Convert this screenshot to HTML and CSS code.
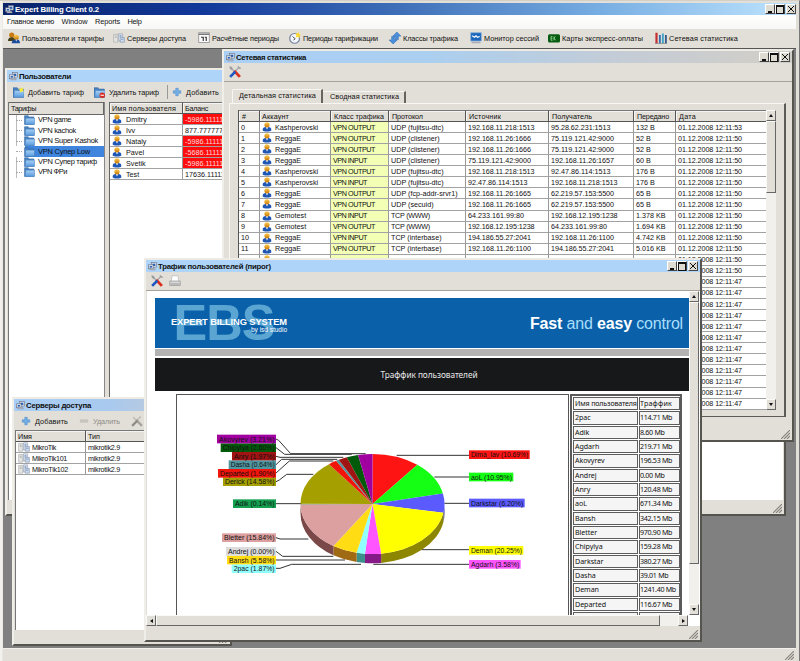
FILE: index.html
```html
<!DOCTYPE html>
<html lang="ru">
<head>
<meta charset="utf-8">
<title>Expert Billing Client 0.2</title>
<link rel="stylesheet" href="styles.css">
</head>
<body>
<svg class="defs" aria-hidden="true">
  <defs>
    <linearGradient id="gold" x1="0" y1="0" x2="0" y2="1"><stop offset="0" stop-color="#ffd25a"/><stop offset="1" stop-color="#c87400"/></linearGradient>
    <linearGradient id="blue" x1="0" y1="0" x2="0" y2="1"><stop offset="0" stop-color="#a8d2f6"/><stop offset="1" stop-color="#5a9ade"/></linearGradient>
  </defs>
  <symbol id="app" viewBox="0 0 16 16"><rect x="6" y="1" width="9" height="8" fill="#dfe6ee" stroke="#667"/><rect x="8" y="3" width="5" height="4" fill="#2860b8"/><rect x="1" y="5" width="8" height="7" fill="#dfe6ee" stroke="#667"/><rect x="3" y="7" width="4" height="3" fill="#2860b8"/><path d="M3 14h10l-1-3H4z" fill="#b8c0c8" stroke="#778" stroke-width=".7"/></symbol>
  <symbol id="user" viewBox="0 0 16 16"><path d="M1 13c0-4 2-5 5-5h4c3 0 5 1 5 5 0 3-14 3-14 0z" fill="#1d56b4"/><path d="M6 8l2 4 2-4z" fill="#fff"/><circle cx="8" cy="4.500" r="4.200" fill="url(#gold)"/></symbol>
  <symbol id="users" viewBox="0 0 16 16"><circle cx="5" cy="4" r="3.500" fill="#c97a10"/><path d="M0 12c0-4 2-5 5-5s6 1 6 5z" fill="#47401c"/><circle cx="11" cy="7" r="3.500" fill="url(#gold)"/><path d="M5 15c0-4 3-5 6-5s5 1 5 5z" fill="#1d4c9c"/><path d="M10 10l1 3 1-3z" fill="#fff"/></symbol>
  <symbol id="servers" viewBox="0 0 20 16"><path d="M1 2h7v13H1z" fill="#e4e4e2" stroke="#a8a8a8"/><path d="M3 5h3M3 7h3" stroke="#999"/><path d="M9 1h7v12H9z" fill="#dce4ee" stroke="#8e9bb0"/><path d="M11 4h3M11 6h3" stroke="#4775b8"/><path d="M12 7h7v8h-7z" fill="#cfdbea" stroke="#7e90aa"/><path d="M13.500 10h4" stroke="#4775b8"/></symbol>
  <symbol id="calendar" viewBox="0 0 16 16"><rect x="1" y="1" width="14" height="13" fill="#fafafa" stroke="#888"/><path d="M1 3h14" stroke="#777" stroke-width="2"/><path d="M4 7h3v5M9 7h2v5" fill="none" stroke="#333" stroke-width="1.500"/></symbol>
  <symbol id="clock" viewBox="0 0 16 16"><circle cx="7.500" cy="8.500" r="6.500" fill="#f4f7ff" stroke="#77809c" stroke-width="1.600"/><path d="M5 6l3 3-2 2" fill="none" stroke="#333" stroke-width="1.300"/><path d="M12.500 0l1 2.500 2.500.5-2 2 .5 3-2.500-1.500L9 7l1-3-1.500-2 2.500 0z" fill="#ffd82c"/></symbol>
  <symbol id="arrows" viewBox="0 0 16 16"><path d="M10.500 0L16 5.500h-3.500V10h-4V5.500H5z" fill="#4b90dc" stroke="#2563ae" stroke-width=".6"/><path d="M5.500 16L0 10.500h3.500V6h4v4.500H11z" fill="#4b90dc" stroke="#2563ae" stroke-width=".6"/></symbol>
  <symbol id="monitor" viewBox="0 0 16 16"><rect x="1" y="1" width="14" height="11" fill="#1e66bc" stroke="#86add6"/><path d="M3 5l3 2 2-2 2 2 3-1" fill="none" stroke="#fff" stroke-width="1.500"/><path d="M2 14h12" stroke="#aab" stroke-width="2"/></symbol>
  <symbol id="card" viewBox="0 0 16 16"><rect x="0" y="3" width="16" height="11" rx="2" fill="#075c12"/><path d="M6 6h-2v5h2M4 8.500h2M8 6v5M8 8l2-2M8 8l2 3" fill="none" stroke="#8fd08f" stroke-width="1.200"/></symbol>
  <symbol id="bars" viewBox="0 0 16 16"><path d="M2 1v14" stroke="#c53030" stroke-width="3"/><path d="M6.500 4v11" stroke="#356fae" stroke-width="2.500"/><path d="M10.500 2v13" stroke="#3fa3c8" stroke-width="2.500"/><path d="M14.500 4v11" stroke="#355c8c" stroke-width="2.500"/><path d="M0 15.500h16" stroke="#777"/></symbol>
  <symbol id="folder" viewBox="0 0 16 16"><path d="M0 1h6l1 2h8v12H0z" fill="#4882c0" stroke="#35679e" stroke-width=".8"/><path d="M2 5h14v10H1z" fill="url(#blue)" stroke="#437bb8" stroke-width=".7"/></symbol>
  <symbol id="folder-add" viewBox="0 0 16 16"><use href="#folder"/><path d="M12 0l1 2 3 0-2 2 2 3-3-1-2 2-1-3-2-2 3 0z" fill="#ffee2c"/></symbol>
  <symbol id="folder-del" viewBox="0 0 16 16"><use href="#folder"/><circle cx="12" cy="12" r="4" fill="#d92d20"/><path d="M9.500 12h5" stroke="#fff" stroke-width="1.500"/></symbol>
  <symbol id="plus" viewBox="0 0 16 16"><path d="M6 2h4v4h4v4h-4v4H6v-4H2V6h4z" fill="#72aee6" stroke="#4b86c4" stroke-width=".8"/></symbol>
  <symbol id="minus" viewBox="0 0 16 16"><path d="M2 6h12v4H2z" fill="#c8c6c0" stroke="#b4b2ac" stroke-width=".6"/></symbol>
  <symbol id="tools" viewBox="0 0 16 16"><path d="M3 3l6 6M13 2L8 7" stroke="#a9adb2" stroke-width="2"/><path d="M7 6.500l7.500 8" stroke="#dc2f1e" stroke-width="3.800"/><path d="M8.500 7.500L1.500 14.500" stroke="#1c58c4" stroke-width="3.500"/><path d="M1 1l3 1v3L2 4zM12 0l1 3h3" fill="#999" stroke="#999"/></symbol>
  <symbol id="tools-off" viewBox="0 0 16 16"><path d="M3 3l6 6M13 2L8 7" stroke="#bdbbb5" stroke-width="2"/><path d="M7 6.500l7.500 8" stroke="#a5a39d" stroke-width="3"/><path d="M8.500 7.500L1.500 14.500" stroke="#8f8d88" stroke-width="3"/></symbol>
  <symbol id="printer" viewBox="0 0 16 16"><path d="M4 1h8l1 8H3z" fill="#fff" stroke="#bbb"/><path d="M1 8h14v6H1z" fill="#d7d7d7" stroke="#999"/><path d="M2 12h12" stroke="#888"/></symbol>
  <symbol id="grip" viewBox="0 0 9 9"><path d="M0 9l9-9M3 9l6-6M6 9l3-3" stroke="#85827c" stroke-width="1.100"/></symbol>
</svg>

<div class="app">
  <header class="title main-title">
    <svg class="i9"><use href="#app"/></svg><b class="t" data-w="84">Expert Billing Client 0.2</b>
    <span class="ctl"><i class="min"></i><i class="max"></i><i class="close"></i></span>
  </header>
  <nav class="menu"><span data-w="47">Главное меню</span><span data-w="26">Window</span><span data-w="25">Reports</span><span data-w="14">Help</span></nav>
  <div class="main-tools">
    <div><svg><use href="#users"/></svg><span data-w="82">Пользователи и тарифы</span></div>
    <div><svg><use href="#servers"/></svg><span data-w="59">Серверы доступа</span></div>
    <div><svg><use href="#calendar"/></svg><span data-w="67">Расчётные периоды</span></div>
    <div><svg><use href="#clock"/></svg><span data-w="75">Периоды тарификации</span></div>
    <div><svg><use href="#arrows"/></svg><span data-w="55">Классы трафика</span></div>
    <div><svg><use href="#monitor"/></svg><span data-w="55">Монитор сессий</span></div>
    <div><svg><use href="#card"/></svg><span data-w="81">Карты экспресс-оплаты</span></div>
    <div><svg><use href="#bars"/></svg><span data-w="69">Сетевая статистика</span></div>
  </div>

  <main class="desk"></main>
  <footer class="status"><svg class="grip"><use href="#grip"/></svg></footer>
</div>

<section class="win users">
  <header class="title"><svg class="i9"><use href="#app"/></svg><b class="t" data-w="52">Пользователи</b></header>
  <div class="tools">
    <svg class="i11"><use href="#folder-add"/></svg><span data-w="56">Добавить тариф</span>
    <svg class="i11 g2"><use href="#folder-del"/></svg><span data-w="50">Удалить тариф</span>
    <i class="vsep"></i>
    <svg class="i10"><use href="#plus"/></svg><span data-w="33">Добавить</span>
  </div>
  <div class="split">
    <div class="tree"><div class="th"><span data-w="25">Тарифы</span></div><ul id="tree"></ul></div>
    <div class="grid ugrid" id="ugrid"></div>
  </div>
  <footer class="foot"><svg class="grip"><use href="#grip"/></svg></footer>
</section>

<section class="win stats">
  <header class="title grad"><svg class="i9"><use href="#app"/></svg><b class="t" data-w="70">Сетевая статистика</b>
    <span class="ctl"><i class="min"></i><i class="max"></i><i class="close"></i></span></header>
  <div class="tools line"><svg class="i12"><use href="#tools"/></svg></div>
  <div class="tabs"><div class="tab on"><span data-w="77">Детальная статистика</span></div><div class="tab"><span data-w="69">Сводная статистика</span></div></div>
  <div class="panel">
    <div class="grid sgrid" id="sgrid"></div>
    <div class="sb vert"><i class="up"></i><i class="thumb"></i><i class="track"></i><i class="down"></i></div>
  </div>
  <footer class="foot"><svg class="grip"><use href="#grip"/></svg></footer>
</section>

<section class="win srv">
  <header class="title grad2"><svg class="i9"><use href="#app"/></svg><b class="t" data-w="65">Серверы доступа</b></header>
  <div class="tools">
    <svg class="i10"><use href="#plus"/></svg><span data-w="33">Добавить</span>
    <svg class="i10 g2"><use href="#minus"/></svg><span class="off" data-w="27">Удалить</span>
    <svg class="i12 g2"><use href="#tools-off"/></svg>
  </div>
  <div class="grid vgrid" id="vgrid"></div>
  <footer class="foot"><svg class="grip"><use href="#grip"/></svg></footer>
</section>

<section class="win pie">
  <header class="title"><svg class="i9"><use href="#app"/></svg><b class="t" data-w="113">Трафик пользователей (пирог)</b>
    <span class="ctl"><i class="min"></i><i class="max"></i><i class="close"></i></span></header>
  <div class="tools line"><svg class="i12"><use href="#tools"/></svg><svg class="i12 prn"><use href="#printer"/></svg></div>
  <div class="view">
    <div class="report">
      <div class="banner">
        <div class="logo"><span class="ebs">EBS</span><span class="full"><b data-w="116">EXPERT BILLING SYSTEM</b><small data-w="36">by isd studio</small></span></div>
        <div class="slogan" data-w="153"><b>Fast</b> and <b>easy</b> control</div>
      </div>
      <div class="strip"></div>
      <div class="caption"><span data-w="97">Траффик пользователей</span></div>
      <div class="cols"><div class="chart"><svg id="chart" viewBox="0 0 1050 465"></svg></div><div class="traffic" id="traffic"></div></div>
    </div>
    <div class="sb vert"><i class="up"></i><i class="thumb"></i><i class="track"></i><i class="down"></i></div>
  </div>
  <div class="sb horz"><i class="left"></i><i class="thumb"></i><i class="track"></i><i class="right"></i><i class="corner"></i></div>
  <footer class="foot"><svg class="grip"><use href="#grip"/></svg></footer>
</section>
<script src="script.js"></script>
</body>
</html>
```
FILE: styles.css
```css
* { box-sizing: border-box; }
html, body { margin: 0; width: 800px; height: 661px; overflow: hidden; }
body { font: 7.3px/9px "Liberation Sans", Arial, sans-serif; color: #111; background: #e2dfd8; white-space: nowrap; }
.defs { position: absolute; width: 0; height: 0; }
i { display: block; flex: none; }
svg { flex: none; display: block; }
span, b { flex: none; }

.app { width: 800px; height: 661px; padding: 2px 3px 0; display: flex; flex-direction: column; border-top: 1px solid #d4d0c8; border-right: 1px solid #777; background: linear-gradient(90deg, #f3f1ed 2px, #e2dfd8 3px); }
.title { height: 12px; display: flex; align-items: center; background: #aed5f9; padding-left: 2px; gap: 1px; flex: none; }
.title .t { font-size: 7.8px; }
.main-title { background: linear-gradient(90deg, #0a246a 0, #12389a 25%, #3f6fb8 50%, #76ade2 75%, #b4dcfa 96%); color: #fff; }
.grad { background: linear-gradient(90deg, #aacff5 0, #aacff0 35%, #c4ccd6 70%, #d0cec9 95%); }
.grad2 { background: linear-gradient(90deg, #a9cff6 0, #a9c9ee 45%, #c2cad6 75%, #d0cec9); }
.i9 { width: 9px; height: 9px; }
.i10 { width: 10px; height: 10px; }
.i11 { width: 11px; height: 11px; }
.i12 { width: 12px; height: 12px; }
.ctl { margin-left: auto; display: flex; padding-right: 2px; }
.main-title .ctl { padding-right: 0; }
.ctl i { width: 10px; height: 10px; background: #dedbd3; border: 1px solid; border-color: #fff #444 #444 #fff; display: grid; place-items: center; }
.ctl .close { margin-left: 1px; }
.ctl i::before { content: ""; width: 6px; height: 6px; }
.ctl .min::before { border-bottom: 2px solid #111; width: 4px; }
.ctl .max::before { border: 1px solid #111; border-top-width: 2px; }
.ctl .close::before { background: linear-gradient(45deg, transparent 42%, #111 42% 58%, transparent 58%), linear-gradient(-45deg, transparent 42%, #111 42% 58%, transparent 58%); }
.menu { height: 14px; flex: none; display: flex; align-items: center; background: linear-gradient(#fff, #f7f7f5); padding: 0 0 2px 4px; gap: 7.5px; font-size: 7.4px; }
.main-tools { height: 19px; flex: none; display: grid; grid-template-columns: 105px 85px 91px 100px 81px 78px 107px 100px; padding: 0 0 1px 5px; align-items: center; }
.main-tools div { display: flex; align-items: center; gap: 2px; }
.main-tools svg { width: 12px; height: 12px; }
.desk { flex: none; height: 600px; background: #808080; border-top: 1px solid #555; }
.status { flex: 1; position: relative; border-top: 1px solid #f2f0ec; }
.grip { position: absolute; right: 2px; bottom: 1px; width: 9px; height: 9px; }

.win { position: absolute; background: #e2dfd8; border: 2px solid; border-color: #eeebe5 #55544f #55544f #f0eee9; display: flex; flex-direction: column; }
.users { left: 5px; top: 68px; width: 781px; height: 448px; }
.stats { left: 222px; top: 49px; width: 572px; height: 393px; }
.srv { left: 12px; top: 397px; width: 220px; height: 249px; }
.pie { left: 144px; top: 258px; width: 558px; height: 384px; }
.tools { height: 20px; flex: none; display: flex; align-items: center; padding-left: 6px; gap: 4px; }
.line { border-bottom: 1px solid #a5a29c; height: 19px; padding-left: 5px; }
.srv .tools { padding-left: 7px; }
.g2 { margin-left: 7px; }
.users .g2 { margin-left: 6px; }
.off { color: #8e8c87; }
.vsep { width: 1px; height: 14px; background: #999; margin: 0 0 0 4px; }
.foot { position: relative; flex: none; height: 14px; }

.split { flex: 1; display: flex; min-height: 0; margin: 0 1px; }
.tree { width: 97px; background: #fff; border-left: 1px solid #777; border-right: 1px solid #888; margin-right: 4px; flex: none; }
.th { height: 13px; background: #e2dfd8; border: 1px solid #666; padding-left: 2px; line-height: 12px; border-left: 0; }
.tree ul { list-style: none; margin: 0; padding: 0; }
.tree li { height: 10.45px; display: flex; align-items: center; padding-left: 7px; background: linear-gradient(#bbb, #bbb) 7px 0 / 1px 100% no-repeat; }
.tree li::before { content: ""; width: 6px; border-top: 1px dotted #aaa; }
.tree li svg { width: 11px; height: 10px; margin: 0 3px 0 2px; }
.tree li span { font-size: 7.5px; line-height: 10px; }
.tree li.sel { background: linear-gradient(90deg, transparent 16px, #3f84dd 16px); }

.grid { background: #fff; overflow: hidden; font-size: 7.2px; }
.row { display: grid; height: 11.07px; }
.row > span { border-right: 1px solid #999; border-bottom: 1px solid #a2a2a2; padding-left: 2px; display: flex; align-items: center; gap: 4px; overflow: hidden; line-height: 9px; }
.row svg { width: 10px; height: 10px; }
.row.head { height: 12px; }
.row.head > span { background: #e2dfd8; border-color: #555; border-top: 1px solid #777; box-shadow: inset 1px 1px #f6f4f0; }
.ugrid { flex: 1; border-left: 1px solid #666; }
.ugrid .row { grid-template-columns: 73px 80px; }
.ugrid .neg { background: #ff0d0d; color: #ffd9d9; }
.vgrid { flex: 1; margin-left: 1px; border-left: 1px solid #777; margin-top: -1px; }
.vgrid .row { grid-template-columns: 70px 147px; }
.vgrid .row svg { width: 12px; }
.vgrid .row > span { gap: 2px; }
.sgrid { width: 529px; border-left: 1px solid #555; }
.sgrid .row { grid-template-columns: 21px 71px 58px 77px 83px 85px 42px 92px; }
.sgrid .row > :last-child { border-right: 0; }
.sgrid .row:not(.head) > :nth-child(3) { background: #f3ffb4; }
.sgrid .row > :nth-child(2) { gap: 3px; }
.sgrid .row.head > :not(:nth-child(2)) { padding-left: 3px; }

.tabs { display: flex; height: 21px; align-items: flex-end; padding-left: 8px; flex: none; }
.tab { height: 12px; border-right: 2px solid #66645f; border-top: 1px solid #f8f6f2; padding: 0 5px 0 7px; line-height: 9px; }
.tab.on { height: 14px; border-left: 1px solid #f8f6f2; border-radius: 2px 0 0; padding: 1px 5px 0 6px; }
.panel { margin: 0 6px 0 5px; height: 314px; flex: none; display: flex; padding: 6px 8px 6px; border: 1px solid; border-color: #f8f6f2 #5d5b57 #5d5b57 #f8f6f2; border-right-width: 2px; border-bottom-width: 1px; }
.stats .foot { flex: 1; }

.sb { display: flex; background: #f0eeea; flex: none; }
.vert { width: 10px; flex-direction: column; }
.horz { height: 11px; }
.sb i { background: #e2dfd8; border: 1px solid; border-color: #fbfaf7 #666 #666 #fbfaf7; display: grid; place-items: center; }
.sb .up, .sb .down { height: 11px; }
.sb .left, .sb .right { width: 10px; }
.sb .track { flex: 1; background: #f2f0ed; border: 0; }
.sb .up::before { content: ""; border: 2.5px solid transparent; border-top: 0; border-bottom: 3px solid #111; }
.sb .down::before { content: ""; border: 2.5px solid transparent; border-bottom: 0; border-top: 3px solid #111; }
.sb .left::before { content: ""; border: 2.5px solid transparent; border-left: 0; border-right: 3px solid #111; }
.sb .right::before { content: ""; border: 2.5px solid transparent; border-right: 0; border-left: 3px solid #111; }
.stats .thumb { height: 72px; }
.pie .vert .thumb { height: 262px; }
.horz .thumb { width: 504px; }
.horz .corner { width: 12px; background: #fff; border: 0; }

.prn { margin-left: 2px; }
.view { height: 324px; flex: none; display: flex; background: #fff; margin-left: 1px; }
.report { width: 542px; height: 324px; flex: none; overflow: hidden; padding: 7px 0 0 8px; font-family: "Noto Sans", "Open Sans", sans-serif; }
.banner { height: 50px; background: #0a61aa; display: flex; justify-content: space-between; align-items: center; padding-right: 6px; font-family: "Liberation Sans", Arial, sans-serif; color: #fff; }
.logo { display: grid; padding-left: 16px; }
.logo > * { grid-area: 1 / 1; }
.ebs { font-size: 50.5px; font-weight: bold; line-height: 50px; color: #5aa5d2; margin-left: 2.5px; letter-spacing: -1px; }
.full { align-self: center; display: flex; flex-direction: column; width: 116px; margin-top: 5px; }
.full b { font-size: 9.3px; line-height: 8px; }
.full small { font-size: 6.5px; line-height: 7px; align-self: flex-end; }
.slogan { font-size: 16px; line-height: 20px; color: #a9defa; white-space: pre; padding-top: 2px; }
.slogan b { color: #fff; }
.strip { height: 7px; background: #b3b3b3; margin: 1px 0 2px; }
.caption { height: 33px; background: #17181a; color: #e6e6e6; display: flex; justify-content: center; align-items: center; font-size: 8.3px; padding-left: 14px; }
.cols { display: flex; padding: 3px 0 0 21px; }
.chart { width: 393px; height: 240px; border: 1px solid #555; padding: 30px 0 0 23px; margin-right: 1px; flex: none; }
.chart svg { width: 350px; height: 155px; }
.chart text { font: 22px "Liberation Sans", sans-serif; fill: #111; }
.chart polyline { fill: none; stroke: #333; stroke-width: 3; }
.traffic { width: 112px; height: 300px; border: 2px solid #5a5a5a; padding: 1px; display: grid; grid-template-columns: 65px 41px; grid-auto-rows: 13.33px; gap: 1px; flex: none; }
.traffic div { border: 1px solid #5d5d5d; background: #f5f5f5; font-size: 7.1px; line-height: 11px; padding-left: 1px; overflow: hidden; letter-spacing: -.05px; }
.traffic div:nth-child(even) { letter-spacing: -.3px; padding-left: 0; }
```
FILE: script.js
```js
const $ = id => document.getElementById(id);
const icon = name => `<svg><use href="#${name}"/></svg>`;
const row = (cells, cls = '') => `<div class="row ${cls}">${cells.map(c => c.startsWith('<span') ? c : `<span>${c}</span>`).join('')}</div>`;
const w = (text, width) => `<b style="font-weight:normal" data-w="${width}">${text}</b>`;

$('tree').innerHTML = [['VPN game', 33], ['VPN kachok', 38], ['VPN Super Kashok', 60], ['VPN Супер Low', 52], ['VPN Супер тариф', 59], ['VPN ФРи', 29]]
  .map(([t, n], i) => `<li class="${i === 3 ? 'sel' : ''}">${icon('folder')}<span data-w="${n}">${t}</span></li>`).join('');

$('ugrid').innerHTML = row([w('Имя пользователя', 64), w('Баланс', 23)], 'head') +
  [['Dmitry', '-5986.111111'], ['Ivv', '877.7777777'], ['Nataly', '-5986.111111'], ['Pavel', '-5686.111111'], ['Svetik', '-5986.111111'], ['Test', '17636.111111']]
    .map(([n, b]) => row([icon('user') + n, `<span class="${b[0] === '-' ? 'neg' : ''}">${b}</span>`])).join('');

$('vgrid').innerHTML = row(['Имя', 'Тип'], 'head') +
  [['MikroTik', 24], ['MikroTik101', 35], ['MikroTik102', 36]].map(([n, k]) => row([icon('servers') + w(n, k), w('mikrotik2.9', 32)])).join('');

const K = 'Kashperovski', R = 'ReggaE', G = 'Gemotest', O = 'VPN OUTPUT', I = 'VPN INPUT', D = '01.12.2008 12:11:';
const stats = [
  [K, O, 'UDP (fujitsu-dtc)', '192.168.11.218:1513', '95.28.62.231:1513', '132 B', 53],
  [R, O, 'UDP (clistener)', '192.168.11.26:1666', '75.119.121.42:9000', '52 B', 50],
  [R, O, 'UDP (clistener)', '192.168.11.26:1666', '75.119.121.42:9000', '52 B', 50],
  [R, I, 'UDP (clistener)', '75.119.121.42:9000', '192.168.11.26:1657', '60 B', 50],
  [K, O, 'UDP (fujitsu-dtc)', '192.168.11.218:1513', '92.47.86.114:1513', '176 B', 50],
  [K, I, 'UDP (fujitsu-dtc)', '92.47.86.114:1513', '192.168.11.218:1513', '176 B', 50],
  [R, O, 'UDP (fcp-addr-srvr1)', '192.168.11.26:1665', '62.219.57.153:5500', '65 B', 50],
  [R, O, 'UDP (secuid)', '192.168.11.26:1665', '62.219.57.153:5500', '65 B', 50],
  [G, I, 'TCP (WWW)', '64.233.161.99:80', '192.168.12.195:1238', '1.378 KB', 50],
  [G, O, 'TCP (WWW)', '192.168.12.195:1238', '64.233.161.99:80', '1.694 KB', 50],
  [R, I, 'TCP (interbase)', '194.186.55.27:2041', '192.168.11.26:1100', '4.742 KB', 50],
  [R, O, 'TCP (interbase)', '192.168.11.26:1100', '194.186.55.27:2041', '5.016 KB', 50]
];
const spans = { 'TCP (WWW)': 39 };
let html = row(['#', w('Аккаунт', 27), w('Класс трафика', 50), w('Протокол', 31), w('Источник', 32), w('Получатель', 40), w('Передано', 32), w('Дата', 17)], 'head');
stats.forEach((s, i) => {
  const ip = t => w(t, t.length * 3.5);
  html += row([String(i), icon('user') + s[0], w(s[1], s[1] === O ? 42 : 34), spans[s[2]] ? w(s[2], spans[s[2]]) : s[2], ip(s[3]), ip(s[4]), s[5], w(D + s[6], 64)]);
});
for (let i = 12; i < 26; i++) html += row(['', i === 12 ? icon('user') : '', '', '', '', '', '', w(D + (i < 14 ? 50 : 47), 64)]);
$('sgrid').innerHTML = html;

$('traffic').innerHTML = [['Имя пользователя', 'Траффик'], ['2pac', '114.71 Mb'], ['Adik', '8.60 Mb'], ['Agdarh', '219.71 Mb'], ['Akovyrev', '196.53 Mb'],
  ['Andrej', '0.00 Mb'], ['Anry', '120.48 Mb'], ['aoL', '671.34 Mb'], ['Bansh', '342.15 Mb'], ['Bletter', '970.90 Mb'], ['Chipylya', '159.28 Mb'],
  ['Darkstar', '380.27 Mb'], ['Dasha', '39.01 Mb'], ['Deman', '1241.40 Mb'], ['Departed', '116.67 Mb'], ['Derick', '893.73 Mb']]
  .map((r, i) => i ? `<div>${r[0]}</div><div>${r[1]}</div>` : `<div>${w(r[0], 61)}</div><div>${w(r[1], 30)}</div>`).join('');

// name, percent, face, side, label left, label right, label centre y, leader points
const slices = [
  ['Dima_lav', 10.69, '#ff1414', '#800', 807, 989, 89, '590,91 807,91'],
  ['aoL', 10.95, '#14ff14', '#080', 807, 940, 156, '703,156 807,156'],
  ['Darkstar', 6.20, '#5a5aff', '#2c2c90', 807, 974, 234, '733,235 807,235'],
  ['Deman', 20.25, '#ffff00', '#8c8600', 807, 970, 376, '665,374 807,374'],
  ['Agdarh', 3.58, '#ff55ff', '#861a86', 807, 962, 418, '520,418 807,418'],
  ['2pac', 1.87, '#90ffff', '#3c908c', 95, 228, 431, '228,430 240,430 275,418 483,418'],
  ['Bansh', 5.58, '#ffdc14', '#a06a14', 81, 228, 405, '228,405 435,405'],
  ['Andrej', 0.00, '#dcdcdc', '#888', 78, 228, 379, '228,379 248,394 400,394'],
  ['Bletter', 15.84, '#dca0a0', '#7a4848', 66, 228, 338, '228,338 240,342 325,342'],
  ['Adik', 0.14, '#14a050', '#085028', 99, 228, 236, '228,236 305,236'],
  ['Derick', 14.58, '#a5a000', '#555', 69, 228, 170, '228,170 238,165 260,148 340,148'],
  ['Departed', 1.90, '#f0140a', '#555', 54, 228, 145, '228,144 268,108 400,108'],
  ['Dasha', 0.64, '#5096a0', '#555', 86, 228, 119, '228,119 245,103 412,103'],
  ['Anry', 1.97, '#a01414', '#555', 96, 228, 93, '228,94 240,97 430,97'],
  ['Chipylya', 2.60, '#005a0a', '#555', 62, 228, 68, '228,68 254,88 455,88'],
  ['Akovyrev', 3.21, '#a000a0', '#555', 51, 228, 42, '228,42 236,46 272,86 497,86']
];
const CX = 517.5, CY = 237, RX = 216, RY = 150, DEPTH = 28;
const pt = (p, dy = 0) => `${(CX + RX * Math.sin(p * Math.PI / 50)).toFixed(1)},${(CY - RY * Math.cos(p * Math.PI / 50) + dy).toFixed(1)}`;
let at = 0, faces = '', sides = '', labels = '', lines = '';
for (const [name, pct, face, side, x1, x2, y, pts] of slices) {
  const end = at + pct, a = Math.max(at, 25), b = Math.min(end, 75);
  if (pct) faces += `<path fill="${face}" d="M${CX},${CY}L${pt(at)}A${RX},${RY} 0 0 1 ${pt(end)}Z"/>`;
  if (b > a) sides += `<path fill="${side}" d="M${pt(a)}A${RX},${RY} 0 0 1 ${pt(b)}L${pt(b, DEPTH)}A${RX},${RY} 0 0 0 ${pt(a, DEPTH)}Z"/>`;
  lines += `<polyline points="${pts}"/>`;
  labels += `<rect x="${x1}" y="${y - 13}" width="${x2 - x1}" height="26" fill="${face}"/><text x="${x1 + 6}" y="${y + 8}" textLength="${x2 - x1 - 10}" lengthAdjust="spacingAndGlyphs">${name} (${pct.toFixed(2)}%)</text>`;
  at = end;
}
$('chart').innerHTML = lines + sides + faces + labels;

// Spread letters so that each caption fills its given width.
document.querySelectorAll('[data-w]').forEach(el => {
  const range = document.createRange();
  range.selectNodeContents(el);
  const width = range.getBoundingClientRect().width;
  el.style.letterSpacing = `${((el.dataset.w - width) / el.textContent.length).toFixed(3)}px`;
});
```
